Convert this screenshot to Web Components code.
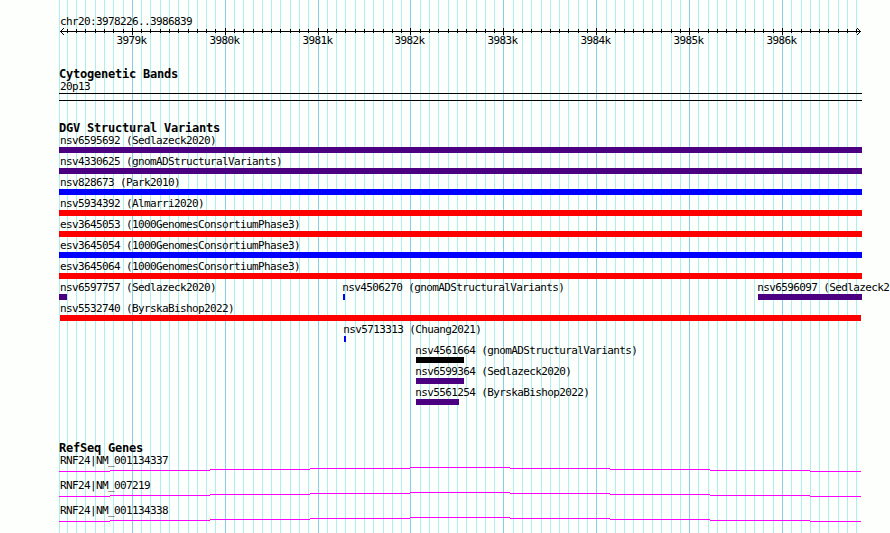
<!DOCTYPE html>
<html lang="en">
<head>
<meta charset="utf-8">
<title>chr20:3978226..3986839</title>
<style>
  body {
    margin: 0;
    background: #fdfffc;
    overflow: hidden;
  }
</style>
</head>
<body>
<genome-browser start="3978226" end="3986839">
  <genome-ruler start="3978226" end="3986839"></genome-ruler>
  <genome-track name="Cytogenetic Bands" style="margin-top: 20px">
    <cyto-band name="20p13"></cyto-band>
  </genome-track>
  <genome-track name="DGV Structural Variants" style="margin-top: 21px">
    <variant-row>
      <sv-feature name="nsv6595692 (Sedlazeck2020)" from="59" to="862" color="#4b0082"></sv-feature>
    </variant-row>
    <variant-row>
      <sv-feature name="nsv4330625 (gnomADStructuralVariants)" from="59" to="862" color="#4b0082"></sv-feature>
    </variant-row>
    <variant-row>
      <sv-feature name="nsv828673 (Park2010)" from="59" to="862" color="#00f"></sv-feature>
    </variant-row>
    <variant-row>
      <sv-feature name="nsv5934392 (Almarri2020)" from="59" to="862" color="#f00"></sv-feature>
    </variant-row>
    <variant-row>
      <sv-feature name="esv3645053 (1000GenomesConsortiumPhase3)" from="59" to="862" color="#f00"></sv-feature>
    </variant-row>
    <variant-row>
      <sv-feature name="esv3645054 (1000GenomesConsortiumPhase3)" from="59" to="862" color="#00f"></sv-feature>
    </variant-row>
    <variant-row>
      <sv-feature name="esv3645064 (1000GenomesConsortiumPhase3)" from="59" to="862" color="#f00"></sv-feature>
    </variant-row>
    <variant-row>
      <sv-feature name="nsv6597757 (Sedlazeck2020)" from="59" to="67" color="#4b0082"></sv-feature>
      <sv-feature name="nsv4506270 (gnomADStructuralVariants)" from="343" to="345" color="#00f"></sv-feature>
      <sv-feature name="nsv6596097 (Sedlazeck2" from="758" to="862" color="#4b0082"></sv-feature>
    </variant-row>
    <variant-row>
      <sv-feature name="nsv5532740 (ByrskaBishop2022)" from="60" to="861" color="#f00"></sv-feature>
    </variant-row>
    <variant-row>
      <sv-feature name="nsv5713313 (Chuang2021)" from="344" to="346" color="#00f"></sv-feature>
    </variant-row>
    <variant-row>
      <sv-feature name="nsv4561664 (gnomADStructuralVariants)" from="416" to="464" color="#000"></sv-feature>
    </variant-row>
    <variant-row>
      <sv-feature name="nsv6599364 (Sedlazeck2020)" from="416" to="464" color="#4b0082"></sv-feature>
    </variant-row>
    <variant-row>
      <sv-feature name="nsv5561254 (ByrskaBishop2022)" from="416" to="459" color="#4b0082"></sv-feature>
    </variant-row>
  </genome-track>
  <genome-track name="RefSeq Genes" style="margin-top: 35px">
    <gene-model name="RNF24|NM_001134337"></gene-model>
    <gene-model name="RNF24|NM_007219"></gene-model>
    <gene-model name="RNF24|NM_001134338"></gene-model>
  </genome-track>
</genome-browser>

<script>
const LEFT = 60
const WIDTH = 800

function scale(el) {
  const start = parseInt(el.getAttribute("start"), 10)
  const end = parseInt(el.getAttribute("end"), 10)
  return {
    start,
    end,
    x: pos => Math.round(LEFT + (pos - start) * WIDTH / (end - start + 1))
  }
}

// every 100bp inside the region
function positions({start, end}) {
  const list = []
  for(let pos = Math.ceil(start / 100) * 100; pos <= end; pos += 100) {
    list.push(pos)
  }
  return list
}

class GenomeBrowser extends HTMLElement {

  constructor() {
    super()
    const root = this.attachShadow({mode: 'open'})
    root.innerHTML = `
      <style>
        :host {
          display: block;
          position: relative;
          width: 890px;
          height: 533px;
          overflow: hidden;
          color: #000;
          font: 11px/13px "DejaVu Sans Mono", monospace;
          letter-spacing: -0.623px;
          white-space: nowrap;
        }
        .grid {
          position: absolute;
          top: 0;
          left: 0;
        }
        .tracks {
          position: relative;
          display: flex;
          flex-direction: column;
          padding-top: 15px;
        }
      </style>
      ${this.buildGrid()}
      <div class="tracks"><slot></slot></div>
    `
  }

  buildGrid() {
    const s = scale(this)
    let dom = `<svg class="grid" width="890" height="533" shape-rendering="crispEdges">`
    dom += `<rect x="59" y="0" width="1" height="533" fill="#afeeee"/>`
    for(const pos of positions(s)) {
      const fill = pos % 1000 ? "#afeeee" : "#87ceeb"
      dom += `<rect x="${s.x(pos)}" y="0" width="1" height="533" fill="${fill}"/>`
    }
    return dom + "</svg>"
  }

}

class GenomeRuler extends HTMLElement {

  constructor() {
    super()
    const s = scale(this)
    const root = this.attachShadow({mode: 'open'})
    root.innerHTML = `
      <style>
        :host {
          display: block;
          height: 33px;
        }
        .region {
          padding-left: 60px;
        }
        svg {
          display: block;
          margin-top: -1px;
        }
        .labels {
          display: grid;
          height: 13px;
          margin-top: -2px;
        }
        .labels span {
          grid-area: 1 / 1;
        }
      </style>
      <div class="region">chr20:${s.start}..${s.end}</div>
      ${this.buildAxis(s)}
      <div class="labels">${this.buildLabels(s)}</div>
    `
  }

  buildAxis(s) {
    let dom = `<svg width="890" height="9" shape-rendering="crispEdges">
      <rect x="60" y="4" width="801" height="1"/>`
    for(const pos of positions(s)) {
      const major = pos % 1000 === 0
      dom += `<rect x="${s.x(pos)}" y="${major ? 1 : 2}" width="1" height="${major ? 7 : 4}"/>`
    }
    for(let i = 1; i < 4; i ++) {
      dom += `<rect x="${60 + i}" y="${4 - i}" width="1" height="1"/>`
      dom += `<rect x="${60 + i}" y="${4 + i}" width="1" height="1"/>`
      dom += `<rect x="${860 - i}" y="${4 - i}" width="1" height="1"/>`
      dom += `<rect x="${860 - i}" y="${4 + i}" width="1" height="1"/>`
    }
    return dom + "</svg>"
  }

  buildLabels(s) {
    return positions(s)
      .filter(pos => pos % 1000 === 0)
      .map(pos => `<span style="margin-left: ${s.x(pos) - 15.5}px">${pos / 1000}k</span>`)
      .join("")
  }

}

class GenomeTrack extends HTMLElement {

  constructor() {
    super()
    const root = this.attachShadow({mode: 'open'})
    root.innerHTML = `
      <style>
        :host {
          display: block;
        }
        .title {
          height: 12px;
          padding-left: 59px;
          font-size: 12px;
          font-weight: bold;
          letter-spacing: -0.225px;
        }
      </style>
      <div class="title">${this.getAttribute("name")}</div>
      <slot></slot>
    `
  }

}

class CytoBand extends HTMLElement {

  constructor() {
    super()
    const root = this.attachShadow({mode: 'open'})
    root.innerHTML = `
      <style>
        :host {
          display: block;
        }
        .name {
          padding-left: 60px;
        }
        .band {
          box-sizing: border-box;
          width: 803px;
          height: 8px;
          margin-left: 59px;
          border: solid #000;
          border-width: 1px 0;
        }
      </style>
      <div class="name">${this.getAttribute("name")}</div>
      <div class="band"></div>
    `
  }

}

class VariantRow extends HTMLElement {

  constructor() {
    super()
    const root = this.attachShadow({mode: 'open'})
    root.innerHTML = `
      <style>
        :host {
          display: grid;
          height: 21px;
        }
        ::slotted(*) {
          grid-area: 1 / 1;
        }
      </style>
      <slot></slot>
    `
  }

}

class SvFeature extends HTMLElement {

  constructor() {
    super()
    const from = parseInt(this.getAttribute("from"), 10)
    const to = parseInt(this.getAttribute("to"), 10)
    const root = this.attachShadow({mode: 'open'})
    root.innerHTML = `
      <style>
        :host {
          display: block;
        }
        .name {
          padding-left: ${Math.max(from - 0.7, LEFT)}px;
        }
        .bar {
          width: ${to - from}px;
          height: 6px;
          margin-left: ${from}px;
          background: ${this.getAttribute("color")};
        }
      </style>
      <div class="name">${this.getAttribute("name")}</div>
      <div class="bar"></div>
    `
  }

}

class GeneModel extends HTMLElement {

  constructor() {
    super()
    const root = this.attachShadow({mode: 'open'})
    root.innerHTML = `
      <style>
        :host {
          display: block;
          height: 25px;
        }
        .name {
          padding-left: 60px;
        }
        svg {
          display: block;
        }
      </style>
      <div class="name">${this.getAttribute("name")}</div>
      ${this.buildIntron()}
    `
  }

  // shallow peak, one pixel up or down per step
  buildIntron() {
    const steps = [59, 110, 210, 310, 410, 510, 610, 710, 810, 861]
    let dom = `<svg width="890" height="8" shape-rendering="crispEdges">`
    for(let i = 0; i < steps.length - 1; i ++) {
      dom += `<rect x="${steps[i]}" y="${Math.abs(i - 4)}" width="${steps[i + 1] - steps[i]}" height="1" fill="#f0f"/>`
    }
    return dom + "</svg>"
  }

}

customElements.define("genome-browser", GenomeBrowser)
customElements.define("genome-ruler", GenomeRuler)
customElements.define("genome-track", GenomeTrack)
customElements.define("cyto-band", CytoBand)
customElements.define("variant-row", VariantRow)
customElements.define("sv-feature", SvFeature)
customElements.define("gene-model", GeneModel)
</script>
</body>
</html>
